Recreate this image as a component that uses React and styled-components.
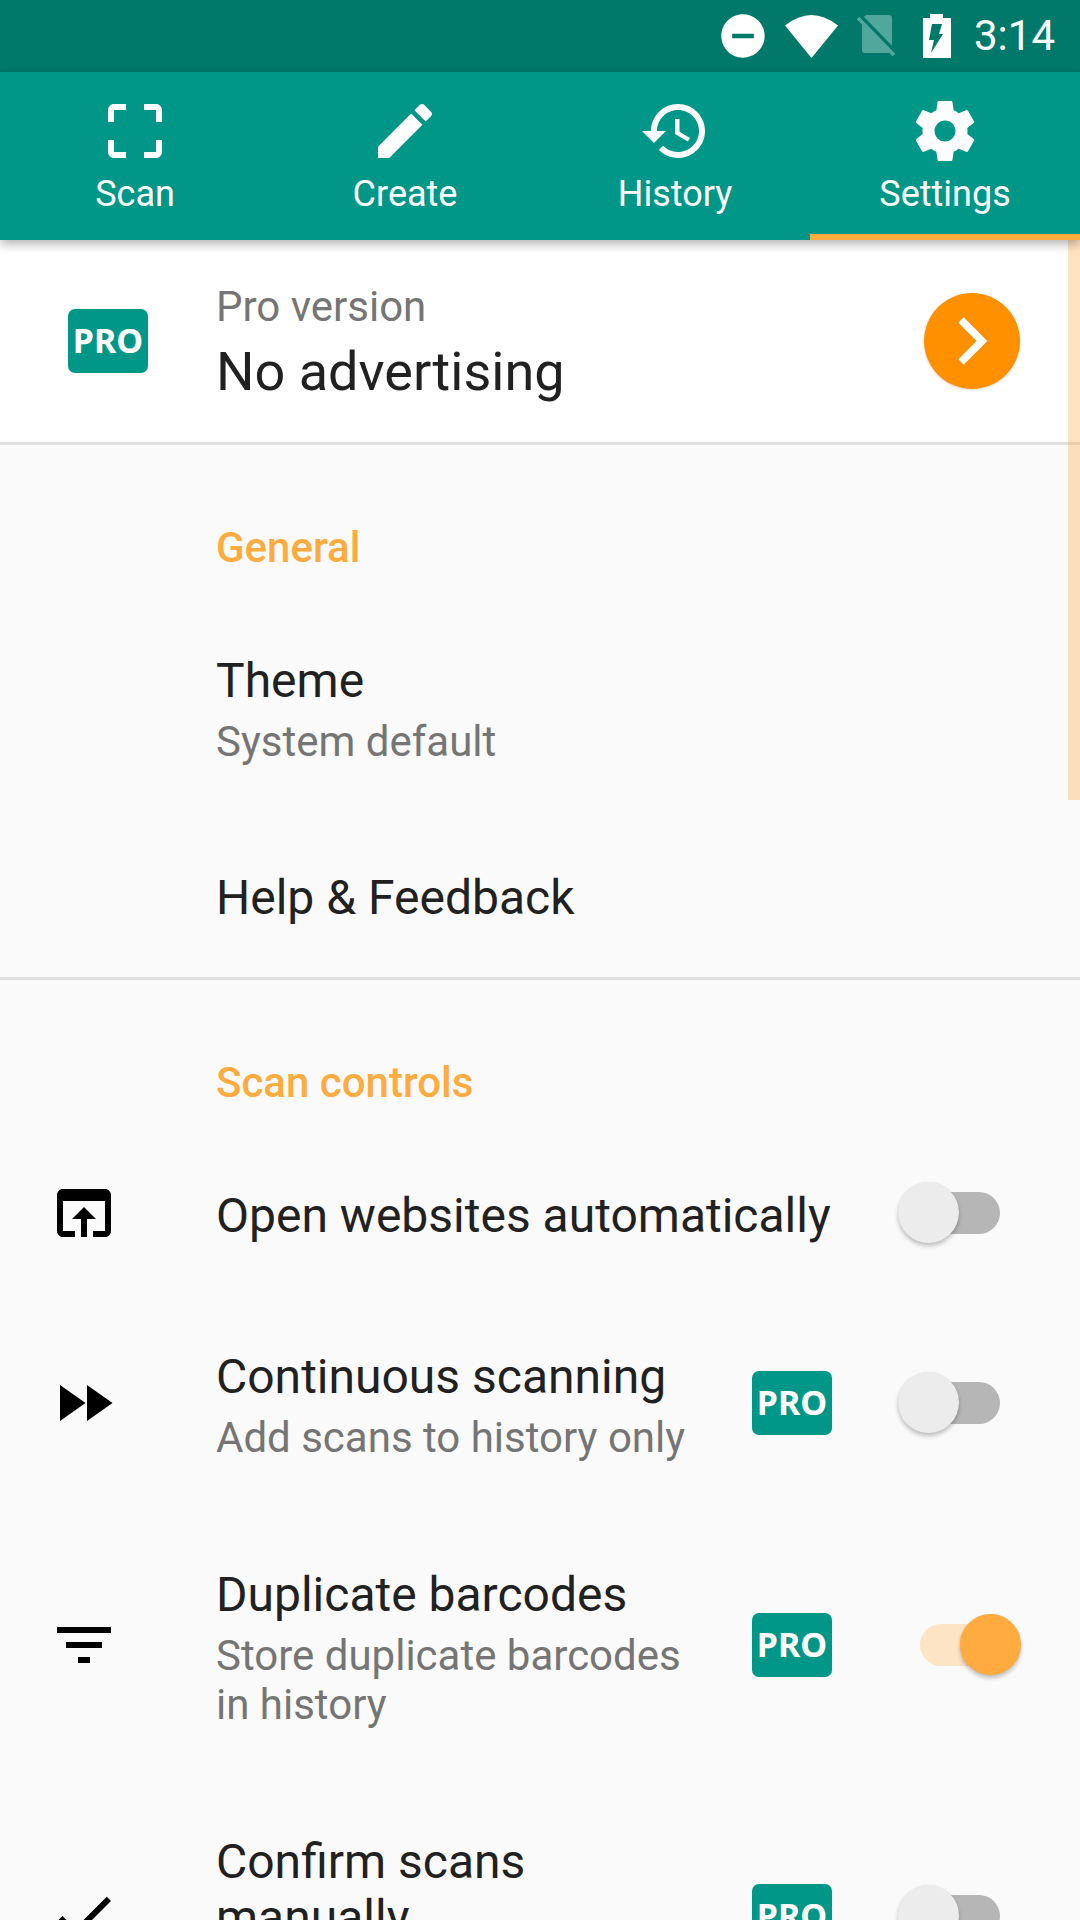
import styled, { createGlobalStyle } from "styled-components";

const GlobalStyle = createGlobalStyle`
  html, body {
    margin: 0;
    padding: 0;
    background: #fafafa;
  }
  * {
    box-sizing: border-box;
  }
`;

const paths = {
  scan: "M3 5v4h2V5h4V3H5c-1.1 0-2 .9-2 2zm2 10H3v4c0 1.1.9 2 2 2h4v-2H5v-4zm14 4h-4v2h4c1.1 0 2-.9 2-2v-4h-2v4zm0-16h-4v2h4v4h2V5c0-1.1-.9-2-2-2z",
  create:
    "M3 17.25V21h3.75L17.81 9.94l-3.75-3.75L3 17.25zM20.71 7.04c.39-.39.39-1.02 0-1.41l-2.34-2.34c-.39-.39-1.02-.39-1.41 0l-1.83 1.83 3.75 3.75 1.83-1.83z",
  history:
    "M13 3c-4.97 0-9 4.03-9 9H1l3.89 3.89.07.14L9 12H6c0-3.87 3.13-7 7-7s7 3.13 7 7-3.13 7-7 7c-1.93 0-3.68-.79-4.94-2.06l-1.42 1.42C8.27 19.99 10.51 21 13 21c4.97 0 9-4.03 9-9s-4.03-9-9-9zm-1 5v5l4.28 2.54.72-1.21-3.5-2.08V8H12z",
  settings:
    "M19.43 12.98c.04-.32.07-.64.07-.98s-.03-.66-.07-.98l2.11-1.65c.19-.15.24-.42.12-.64l-2-3.46c-.12-.22-.39-.3-.61-.22l-2.49 1c-.52-.4-1.08-.73-1.69-.98l-.38-2.65C14.46 2.18 14.25 2 14 2h-4c-.25 0-.46.18-.49.42l-.38 2.65c-.61.25-1.17.59-1.69.98l-2.49-1c-.23-.09-.49 0-.61.22l-2 3.46c-.13.22-.07.49.12.64l2.11 1.65c-.04.32-.07.65-.07.98s.03.66.07.98l-2.11 1.65c-.19.15-.24.42-.12.64l2 3.46c.12.22.39.3.61.22l2.49-1c.52.4 1.08.73 1.69.98l.38 2.65c.03.24.24.42.49.42h4c.25 0 .46-.18.49-.42l.38-2.65c.61-.25 1.17-.59 1.69-.98l2.49 1c.23.09.49 0 .61-.22l2-3.46c.12-.22.07-.49-.12-.64l-2.11-1.65zM12 15.5c-1.93 0-3.5-1.57-3.5-3.5s1.57-3.5 3.5-3.5 3.5 1.57 3.5 3.5-1.57 3.5-3.5 3.5z",
  open: "M19 4H5c-1.11 0-2 .9-2 2v12c0 1.1.89 2 2 2h4v-2H5V8h14v10h-4v2h4c1.1 0 2-.9 2-2V6c0-1.1-.89-2-2-2zm-7 6l-4 4h3v6h2v-6h3l-4-4z",
  forward: "M4 18l8.5-6L4 6v12zm9-12v12l8.5-6L13 6z",
  filter: "M10 18h4v-2h-4v2zM3 6v2h18V6H3zm3 7h12v-2H6v2z",
  check: "M9 16.17L4.83 12l-1.42 1.41L9 19 21 7l-1.41-1.41z",
};

const Icon = ({ name }) => (
  <svg viewBox="0 0 24 24" width="72" height="72" fill="currentColor">
    <path d={paths[name]} />
  </svg>
);

const Page = styled.div`
  position: relative;
  width: 1080px;
  height: 1920px;
  overflow: hidden;
  background: #fafafa;
  font-family: Roboto, "Liberation Sans", sans-serif;
  color: #212121;
`;

const StatusBar = styled.div`
  height: 72px;
  background: #00796b;
  display: flex;
  align-items: center;
  justify-content: flex-end;
  padding-right: 25px;
  color: #fff;
`;

const StatusIcons = styled.div`
  display: flex;
  align-items: center;
  margin-right: 23px;

  svg {
    display: block;
  }
`;

const Clock = styled.span`
  font-size: 42px;
  line-height: 72px;
`;

const TabBar = styled.div`
  position: relative;
  z-index: 2;
  height: 168px;
  background: #009688;
  display: grid;
  grid-template-columns: repeat(4, 1fr);
  box-shadow: 0 4px 10px rgba(0, 0, 0, 0.3);
`;

const Tab = styled.div`
  display: flex;
  flex-direction: column;
  align-items: center;
  padding-top: 23px;
  color: #fff;
  border-bottom: 6px solid ${(p) => (p.$active ? "#ffab40" : "transparent")};

  svg {
    display: block;
  }
`;

const TabLabel = styled.span`
  font-size: 36px;
  line-height: 40px;
  margin-top: 7px;
`;

const ScrollThumb = styled.div`
  position: absolute;
  z-index: 1;
  top: 240px;
  right: 0;
  width: 12px;
  height: 560px;
  background: #ffab40;
  opacity: 0.33;
`;

const ProCard = styled.div`
  height: 205px;
  background: #fff;
  border-bottom: 3px solid #e0e0e0;
  display: grid;
  grid-template-columns: 216px 1fr auto;
  align-items: center;
  padding-right: 60px;
`;

const ProSlot = styled.div`
  padding-left: 68px;
`;

const Badge = styled.span`
  display: flex;
  align-items: center;
  justify-content: center;
  width: 80px;
  height: 64px;
  padding-bottom: 2px;
  border-radius: 7px;
  background: #009688;
  color: #fff;
  font-family: "Noto Sans", "Open Sans", sans-serif;
  font-weight: 700;
  font-size: 34px;
`;

const ProTitle = styled.div`
  font-size: 54px;
  line-height: 56px;
  margin-top: 13px;
`;

const Sub = styled.div`
  font-size: 42px;
  line-height: 49px;
  color: #757575;
`;

const ArrowButton = styled.div`
  width: 96px;
  height: 96px;
  border-radius: 50%;
  background: #ff9100;
  box-shadow: 0 1px 3px rgba(0, 0, 0, 0.15);
  display: flex;
  align-items: center;
  justify-content: center;
  padding-left: 2px;
`;

const Section = styled.section`
  padding-top: 78px;
  border-bottom: ${(p) => (p.$divided ? "3px solid #e0e0e0" : "none")};
`;

const SectionLabel = styled.div`
  padding-left: 216px;
  margin-bottom: ${(p) => p.$gap}px;
  font-size: 42px;
  line-height: 49px;
  font-weight: 500;
  color: #ffab40;
`;

const Row = styled.div`
  display: grid;
  grid-template-columns: 216px 1fr auto auto;
  align-items: center;
  padding: ${(p) => p.$top ?? 52}px 58px ${(p) => p.$bottom ?? 52}px 0;
`;

const IconSlot = styled.div`
  height: 72px;
  padding-left: 48px;
  color: #000;

  svg {
    display: block;
  }
`;

const Body = styled.div`
  padding-right: ${(p) => (p.$pro ? 48 : 0)}px;
  margin-top: ${(p) => p.$shift ?? 0}px;
  margin-bottom: ${(p) => -(p.$shift ?? 0)}px;
`;

const Title = styled.div`
  font-size: 48px;
  line-height: 56px;
  margin-bottom: ${(p) => (p.$hasSub ? 8 : 0)}px;
`;

const RowBadge = styled.div`
  margin-right: 66px;
`;

const Switch = styled.div`
  position: relative;
  width: 124px;
  height: 62px;
`;

const Track = styled.div`
  position: absolute;
  top: 10px;
  left: 22px;
  width: 80px;
  height: 42px;
  border-radius: 21px;
  background: ${(p) => (p.$on ? "#fde4c4" : "#b6b6b6")};
`;

const Thumb = styled.div`
  position: absolute;
  top: 0;
  left: ${(p) => (p.$on ? 62 : 0)}px;
  width: 61px;
  height: 61px;
  border-radius: 50%;
  background: ${(p) => (p.$on ? "#ffab40" : "#ececec")};
  box-shadow: 0 3px 4px rgba(0, 0, 0, 0.24), 0 0 1px rgba(0, 0, 0, 0.08);
`;

const Toggle = ({ on }) => (
  <Switch>
    <Track $on={on} />
    <Thumb $on={on} />
  </Switch>
);

const tabs = [
  { icon: "scan", label: "Scan" },
  { icon: "create", label: "Create" },
  { icon: "history", label: "History" },
  { icon: "settings", label: "Settings", active: true },
];

const StatusGlyphs = () => (
  <StatusIcons>
    <svg width="52" height="52" viewBox="0 0 24 24" fill="#fff">
      <path d="M12 2C6.48 2 2 6.48 2 12s4.48 10 10 10 10-4.48 10-10S17.52 2 12 2zm5 11H7v-2h10v2z" />
    </svg>
    <svg width="53" height="43" viewBox="0 0 53 43" fill="#fff" style={{ marginLeft: 16 }}>
      <path d="M0 10.5Q26.5 -10.5 53 10.5L26.5 43Z" />
    </svg>
    <svg width="38" height="42" viewBox="0 0 38 42" style={{ marginLeft: 19 }}>
      <path d="M9 0H32a3 3 0 0 1 3 3V35a3 3 0 0 1-3 3H8a3 3 0 0 1-3-3V4Z" fill="#52a79c" />
      <path d="M-1 -2L37 37" stroke="#00796b" strokeWidth="6" />
      <path d="M1 3L37 40" stroke="#52a79c" strokeWidth="3.5" />
    </svg>
    <svg width="28" height="44" viewBox="0 0 28 44" fill="#fff" style={{ marginLeft: 28 }}>
      <path
        fillRule="evenodd"
        d="M7 0H20V4H28V44H0V4H7ZM9 10H19L16 20H20L8 39L11 26H6Z"
      />
    </svg>
  </StatusIcons>
);

const App = () => (
  <Page>
    <GlobalStyle />
    <StatusBar>
      <StatusGlyphs />
      <Clock>3:14</Clock>
    </StatusBar>
    <TabBar>
      {tabs.map((t) => (
        <Tab key={t.label} $active={t.active}>
          <Icon name={t.icon} />
          <TabLabel>{t.label}</TabLabel>
        </Tab>
      ))}
    </TabBar>
    <ScrollThumb />
    <ProCard>
      <ProSlot>
        <Badge>PRO</Badge>
      </ProSlot>
      <div>
        <Sub>Pro version</Sub>
        <ProTitle>No advertising</ProTitle>
      </div>
      <ArrowButton>
        <svg width="30" height="48" viewBox="0 0 30 48" fill="none" stroke="#fff" strokeWidth="7.5">
          <path d="M3 3L24 24L3 45" />
        </svg>
      </ArrowButton>
    </ProCard>

    <Section $divided>
      <SectionLabel $gap={29}>General</SectionLabel>
      <Row>
        <span />
        <Body>
          <Title $hasSub>Theme</Title>
          <Sub>System default</Sub>
        </Body>
      </Row>
      <Row $bottom={51}>
        <span />
        <Body>
          <Title>Help &amp; Feedback</Title>
        </Body>
      </Row>
    </Section>

    <Section>
      <SectionLabel $gap={22}>Scan controls</SectionLabel>
      <Row $top={48} $bottom={45}>
        <IconSlot>
          <Icon name="open" />
        </IconSlot>
        <Body $shift={3}>
          <Title>Open websites automatically</Title>
        </Body>
        <span />
        <Toggle />
      </Row>
      <Row $bottom={53}>
        <IconSlot>
          <Icon name="forward" />
        </IconSlot>
        <Body $pro $shift={3}>
          <Title $hasSub>Continuous scanning</Title>
          <Sub>Add scans to history only</Sub>
        </Body>
        <RowBadge>
          <Badge>PRO</Badge>
        </RowBadge>
        <Toggle />
      </Row>
      <Row $bottom={53}>
        <IconSlot>
          <Icon name="filter" />
        </IconSlot>
        <Body $pro $shift={3}>
          <Title $hasSub>Duplicate barcodes</Title>
          <Sub>Store duplicate barcodes in history</Sub>
        </Body>
        <RowBadge>
          <Badge>PRO</Badge>
        </RowBadge>
        <Toggle on />
      </Row>
      <Row>
        <IconSlot>
          <Icon name="check" />
        </IconSlot>
        <Body $pro $shift={3}>
          <Title $hasSub>Confirm scans manually</Title>
          <Sub>&nbsp;</Sub>
        </Body>
        <RowBadge>
          <Badge>PRO</Badge>
        </RowBadge>
        <Toggle />
      </Row>
    </Section>
  </Page>
);

export default App;
